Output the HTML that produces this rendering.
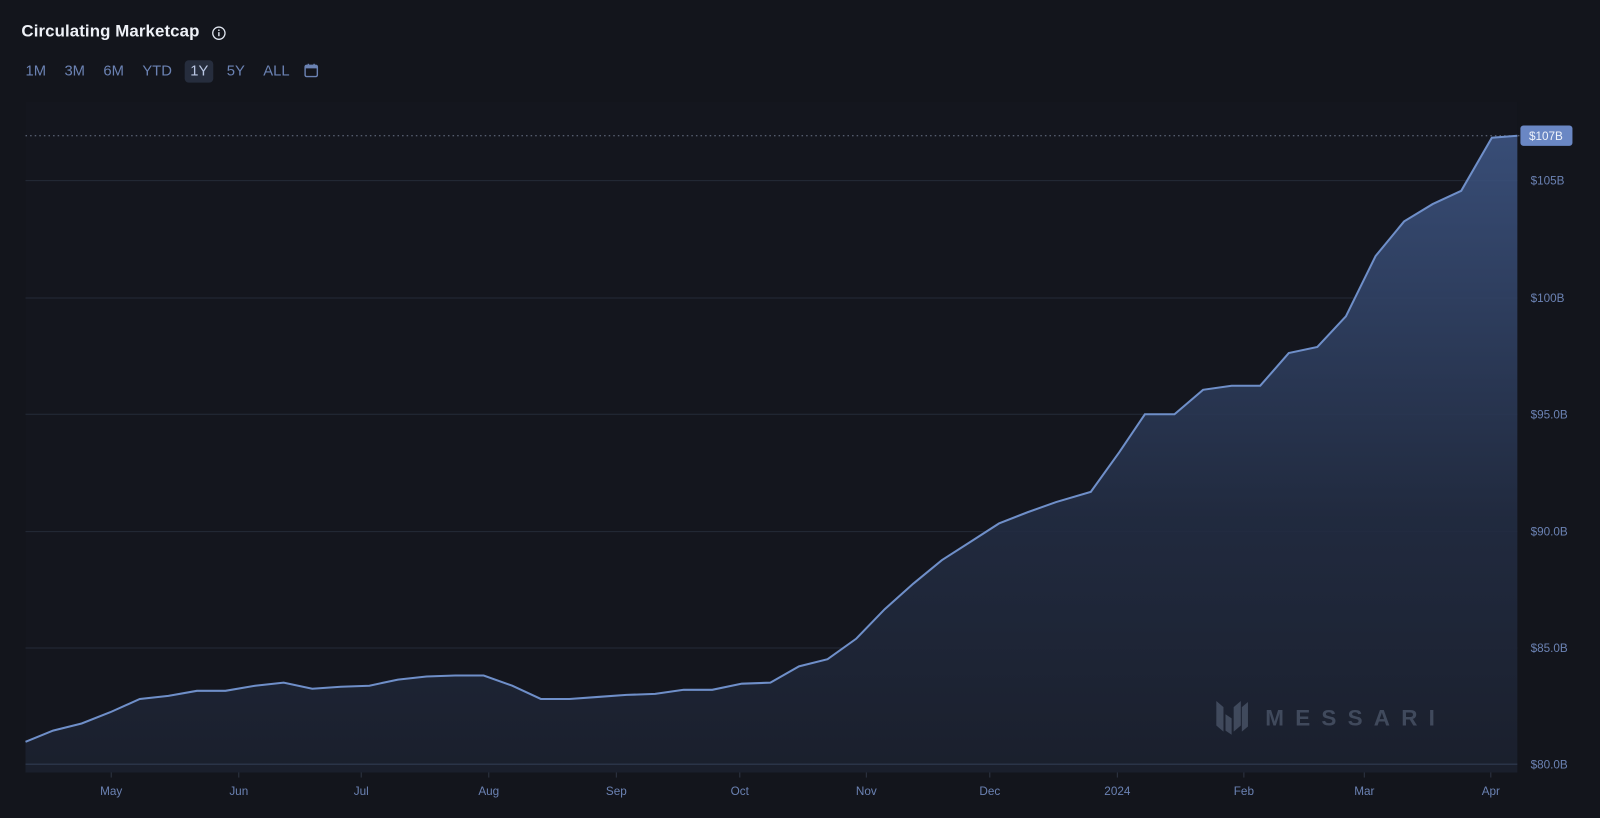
<!DOCTYPE html>
<html><head><meta charset="utf-8"><style>
html,body{margin:0;padding:0;background:#13151c;overflow:hidden}
#w{width:1568px;height:802px;transform:scale(1.020408);transform-origin:0 0;position:relative;font-family:"Liberation Sans",sans-serif}
.t{position:absolute;left:21px;top:22px;color:#eef1f7;font-size:16.5px;font-weight:bold;letter-spacing:0.1px}
.btns{position:absolute;left:20px;top:59px;display:flex;gap:4px}
.btns span{color:#6b82b3;font-size:14.5px;padding:2px 5px;border-radius:4px;line-height:18px;margin-right:4px}
.btns span.a{background:#262d3d;color:#b9c6e3}
</style></head><body><div id="w">
<div class="t">Circulating Marketcap</div>
<svg style="position:absolute;left:207px;top:25px" width="15" height="15" viewBox="0 0 15 15"><circle cx="7.5" cy="7.5" r="6" fill="none" stroke="#dfe4ee" stroke-width="1.3"/><rect x="6.8" y="6.5" width="1.4" height="4" fill="#dfe4ee"/><circle cx="7.5" cy="4.6" r="0.8" fill="#dfe4ee"/></svg>
<div class="btns"><span>1M</span><span>3M</span><span>6M</span><span>YTD</span><span class="a">1Y</span><span>5Y</span><span>ALL</span></div>
<svg style="position:absolute;left:298px;top:62px" width="14" height="14" viewBox="0 0 14 14"><rect x="1" y="2" width="12" height="11" rx="1.5" fill="none" stroke="#6b82b3" stroke-width="1.4"/><rect x="1" y="2" width="12" height="3" fill="#6b82b3"/><rect x="3.5" y="0.5" width="1.4" height="3" fill="#6b82b3"/><rect x="9.1" y="0.5" width="1.4" height="3" fill="#6b82b3"/></svg>
<svg style="position:absolute;left:0;top:0" width="1568" height="802" font-family="Liberation Sans, sans-serif">
<defs><linearGradient id="g" x1="0" y1="0" x2="0" y2="1"><stop offset="0" stop-color="#3c5380" stop-opacity="0.9"/><stop offset="0.6" stop-color="#222c42" stop-opacity="0.9"/><stop offset="1" stop-color="#1a1f2c"/></linearGradient></defs>
<rect x="25" y="100" width="1462" height="657" fill="#14161e"/>
<g stroke="#252b38" stroke-width="1">
<line x1="25" y1="177" x2="1487" y2="177"/><line x1="25" y1="292" x2="1487" y2="292"/><line x1="25" y1="406" x2="1487" y2="406"/><line x1="25" y1="521" x2="1487" y2="521"/><line x1="25" y1="635" x2="1487" y2="635"/>
</g>
<line x1="25" y1="133" x2="1490" y2="133" stroke="#6b7488" stroke-dasharray="1.5 3"/>
<path d="M25,727 L52,716 80,709 108,698 137,685 165,682 193,677 221,677 250,672 278,669 306,675 334,673 362,672 390,666 418,663 446,662 474,662 502,672 530,685 558,685 586,683 614,681 642,680 670,676 698,676 727,670 755,669 783,653 811,646 839,626 867,597 895,572 923,549 951,531 979,513 1007,502 1035,492 1069,482 1097,443 1122,406 1151,406 1179,382 1207,378 1235,378 1263,346 1291,340 1319,310 1348,251 1376,217 1404,200 1432,187 1462,135 1487,133 L1487,757 L25,757 Z" fill="url(#g)"/>
<line x1="25" y1="749" x2="1487" y2="749" stroke="#2a3448" stroke-width="1.5"/>
<path d="M25,727 L52,716 80,709 108,698 137,685 165,682 193,677 221,677 250,672 278,669 306,675 334,673 362,672 390,666 418,663 446,662 474,662 502,672 530,685 558,685 586,683 614,681 642,680 670,676 698,676 727,670 755,669 783,653 811,646 839,626 867,597 895,572 923,549 951,531 979,513 1007,502 1035,492 1069,482 1097,443 1122,406 1151,406 1179,382 1207,378 1235,378 1263,346 1291,340 1319,310 1348,251 1376,217 1404,200 1432,187 1462,135 1487,133" fill="none" stroke="#6f8fc9" stroke-width="2"/>
<g fill="#4a5468" opacity="0.8">
<polygon points="1192,687 1199,693 1199,717 1192,711"/><polygon points="1201,700 1207,704 1207,720 1201,716"/><polygon points="1209,693 1216,687 1216,711 1209,717"/>
<polygon points="1217,693 1223,688 1223,712 1217,717"/>
<text x="1240" y="711" font-size="22" font-weight="bold" letter-spacing="11">MESSARI</text>
</g>
<g fill="#6b82b3" font-size="11.5" text-anchor="start">
<text x="1500" y="181">$105B</text><text x="1500" y="296">$100B</text><text x="1500" y="410">$95.0B</text><text x="1500" y="525">$90.0B</text><text x="1500" y="639">$85.0B</text><text x="1500" y="753">$80.0B</text>
</g>
<rect x="1490" y="123" width="51" height="20" rx="3" fill="#6a87c4"/>
<text x="1515" y="137" fill="#eef2fa" font-size="11.5" text-anchor="middle">$107B</text>
<g stroke="#2e3544"><line x1="109" y1="757" x2="109" y2="762"/><line x1="234" y1="757" x2="234" y2="762"/><line x1="354" y1="757" x2="354" y2="762"/><line x1="479" y1="757" x2="479" y2="762"/><line x1="604" y1="757" x2="604" y2="762"/><line x1="725" y1="757" x2="725" y2="762"/><line x1="849" y1="757" x2="849" y2="762"/><line x1="970" y1="757" x2="970" y2="762"/><line x1="1095" y1="757" x2="1095" y2="762"/><line x1="1219" y1="757" x2="1219" y2="762"/><line x1="1337" y1="757" x2="1337" y2="762"/><line x1="1461" y1="757" x2="1461" y2="762"/></g>
<g fill="#6b82b3" font-size="11.5" text-anchor="middle">
<text x="109" y="779">May</text><text x="234" y="779">Jun</text><text x="354" y="779">Jul</text><text x="479" y="779">Aug</text><text x="604" y="779">Sep</text><text x="725" y="779">Oct</text><text x="849" y="779">Nov</text><text x="970" y="779">Dec</text><text x="1095" y="779">2024</text><text x="1219" y="779">Feb</text><text x="1337" y="779">Mar</text><text x="1461" y="779">Apr</text>
</g>
</svg>
</div></body></html>
